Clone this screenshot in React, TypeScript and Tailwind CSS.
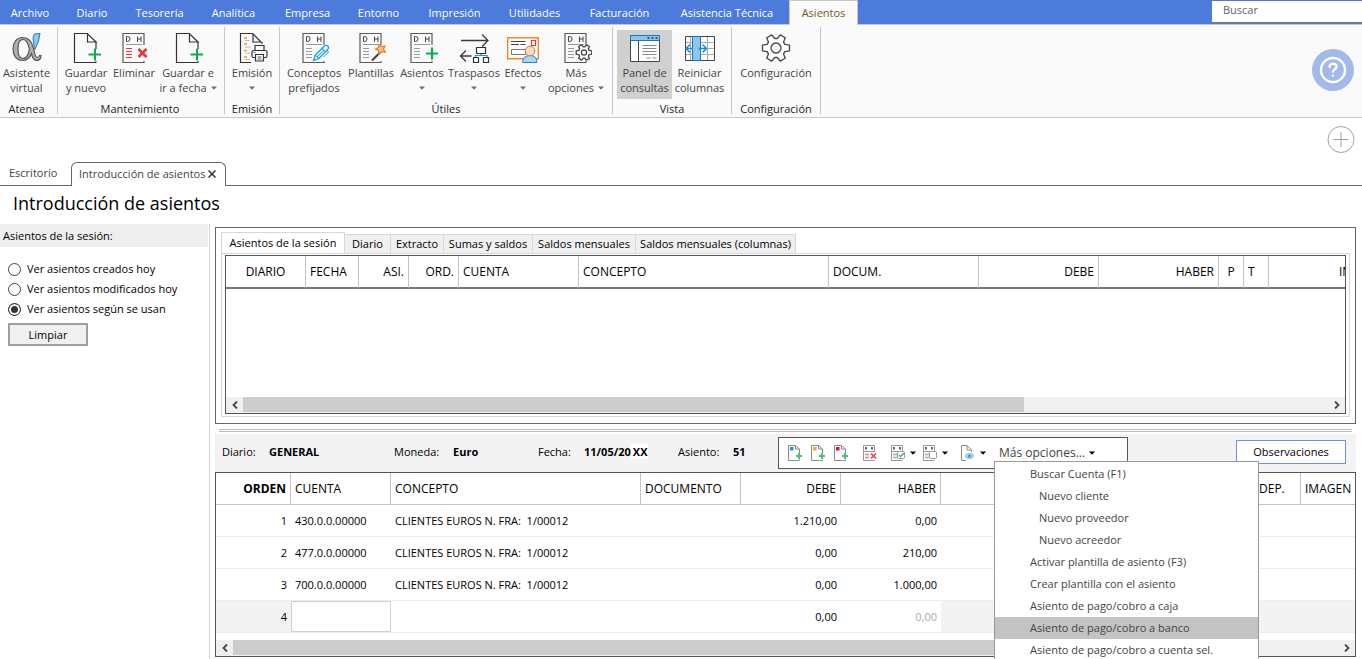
import React from "react";

type Children = { children?: React.ReactNode };

const gearPath = (cx: number, cy: number, outer: number, inner: number) => {
  const pts: string[] = [];
  for (let k = 0; k < 6; k++) {
    const steps: [number, number][] = [
      [-22, inner],
      [-12, outer],
      [12, outer],
      [22, inner],
    ];
    for (const [deg, r] of steps) {
      const a = ((k * 60 + deg) * Math.PI) / 180;
      pts.push(`${(cx + r * Math.cos(a)).toFixed(2)} ${(cy + r * Math.sin(a)).toFixed(2)}`);
    }
  }
  return `M${pts.join("L")}Z`;
};

const Icon = ({ children }: Children) => (
  <svg width="32" height="32" viewBox="0 0 32 32" fill="none" className="mx-auto block shrink-0" aria-hidden="true">
    {children}
  </svg>
);

const Caret = ({ dark = false }: { dark?: boolean }) => (
  <svg width="6" height="4" viewBox="0 0 6 4" className="inline-block shrink-0" aria-hidden="true">
    <path d="M0 0.5h6L3 3.8z" fill={dark ? "#000" : "#6e6e6e"} />
  </svg>
);

const Page = () => (
  <>
    <path d="M18 .5H4.500v29h21.500M26 9v7M26 28v1.500" stroke="#333" strokeWidth="1.200" />
    <path d="M17.500 .8v8.200h8.500z" stroke="#333" strokeWidth="1.200" fill="#fff" />
  </>
);

const Plus = () => <path d="M18.500 21.500h12.500M25 15.500v12" stroke="#12a84c" strokeWidth="2" />;

const Ledger = ({ lines = "#9a9a9a" }: { lines?: string }) => (
  <>
    <path d="M26 12V.5H5v29h21v-1.500" stroke="#5c5c5c" strokeWidth="1.200" />
    <path d="M8.500 3.500h1.200q2.300 0 2.300 2.500t-2.300 2.500h-1.200zM19.500 3.500v5.500M23 3.500v5.500M19.500 6h3.500" stroke="#444" />
    <path d="M8 11.500h16" stroke="#999" />
    <path d="M8 15.500h6M8 18.500h6M8 21.500h6M8 24.500h6" stroke={lines} />
  </>
);

const icons = {
  alpha: (
    <Icon>
      <path
        d="M11.500 4.500C5.500 4.500 2 9.500 2 16s3.500 11.500 9.500 11.500c4.500 0 7.500-3 9-7 1 4.500 2.500 7 5 7 2.800 0 4.500-2 4.500-5h-1.500c-.3 1.500-1 2-2 2-2 0-3-4-4-9-1.500-7-5-11-11-11zM12 6.500c3.800 0 5.500 5 6.500 10-1.200 5.500-3 9-6.500 9-4 0-5-4.500-5-9.500s1-9.500 5-9.500z"
        fill="#b0b0b0"
        stroke="#555"
        strokeWidth="1.200"
        fillRule="evenodd"
      />
      <path d="M22 4.500l1.500-3.500 5.500-.5q-.5 8-5.500 16.500z" fill="#8fc8f0" stroke="#2b78b4" />
    </Icon>
  ),
  pagePlus: (
    <Icon>
      <Page />
      <Plus />
    </Icon>
  ),
  remove: (
    <Icon>
      <Ledger lines="#e33" />
      <path d="M20.500 16l8 8M28.500 16l-8 8" stroke="#ee3338" strokeWidth="2.600" />
    </Icon>
  ),
  print: (
    <Icon>
      <path d="M17 .5H4.500v29H15M26 9v2" stroke="#333" strokeWidth="1.200" />
      <path d="M17 .8v8.200h8z" stroke="#333" strokeWidth="1.200" />
      <path d="M8 5h3M8 11h3M8 17.500h3M8 24h3" stroke="#f0a020" strokeWidth="1.300" />
      <path d="M9 7.500h5M9 14h6M9 20h5M9 26.500h5" stroke="#bbb" />
      <path d="M19 17.500v-5h9v5" fill="#fff" stroke="#333" strokeWidth="1.200" />
      <rect x="16" y="17.500" width="15" height="7" rx="1.500" fill="#fff" stroke="#333" strokeWidth="1.200" />
      <path d="M19.500 21.500h8v6.500h-8z" fill="#fff" stroke="#333" strokeWidth="1.200" />
      <path d="M21.500 24h4M21.500 26h4" stroke="#555" />
      <path d="M17.500 19.500h2" stroke="#1688d0" />
    </Icon>
  ),
  pencil: (
    <Icon>
      <Ledger />
      <path d="M15.500 27.500l1.800-5.500 9-9q2-1.500 3.500 0t0 3.500l-9 9z" fill="#d9f1fd" stroke="#159ddd" strokeWidth="1.200" />
      <path d="M17.300 22l3.500 3.500M24 15.500l3.500 3.200M19 24l7-7M29 17.500l1.500 1.500-5 5" stroke="#159ddd" />
    </Icon>
  ),
  wand: (
    <Icon>
      <Ledger />
      <path d="M17 27.500l8.500-8.500" stroke="#444" strokeWidth="2.200" />
      <path d="M24 11.500l2.500 2 3.500-.5-1.500 3 1.700 3.200-3.600-.5-2.600 2.300-.5-3.500-3-1.500 3-1.500z" fill="#fbc27a" stroke="#ee7a28" strokeWidth="1.200" />
    </Icon>
  ),
  ledgerPlus: (
    <Icon>
      <Ledger />
      <path d="M20 20.500h12M26 14.500v12" stroke="#12a84c" strokeWidth="2.200" />
    </Icon>
  ),
  transfer: (
    <Icon>
      <path d="M3 7.500h26.500M24 1.500l6 6-6 6M2.500 23h11M8 17.500l-5.500 5.500 5.500 5.500" stroke="#3c3c3c" strokeWidth="1.300" />
      <path d="M23 20.500v2M17.500 25v-2.500h11.500v2.500" stroke="#2490d8" strokeWidth="1.200" />
      <path d="M18.500 14.500h9v6h-9zM15.500 24.500h5v5h-5zM25.500 24.500h5v5h-5z" fill="#fff" stroke="#333" strokeWidth="1.200" />
    </Icon>
  ),
  effects: (
    <Icon>
      <path d="M.7 4.700h30.600v21H.7z" fill="#fff" stroke="#ee8a2c" strokeWidth="1.400" />
      <path d="M4 8.500h14.500M4 11.500h8M13.500 11.500h5" stroke="#444" strokeWidth="1.200" />
      <path d="M4.500 16.500h14v5h-14z" stroke="#777" />
      <path d="M24.500 7.500h4v5h-4z" stroke="#e33" strokeWidth="1.200" />
      <path d="M15.500 29.500q.5-7 7.500-7t7 7z" fill="#a9d6f5" stroke="#2c83c4" />
      <circle cx="23" cy="18" r="4.800" fill="#fbdcb8" stroke="#c98048" />
    </Icon>
  ),
  ledgerGear: (
    <Icon>
      <Ledger />
      <path d={gearPath(24, 19.500, 8, 5.600)} fill="#fff" stroke="#444" strokeWidth="1.300" strokeLinejoin="round" />
      <circle cx="24" cy="19.500" r="2.600" stroke="#444" strokeWidth="1.200" />
    </Icon>
  ),
  panel: (
    <Icon>
      <path d="M1.500 2.500h29v26h-29z" fill="#fff" stroke="#444" />
      <path d="M1.500 2.500h29v5h-29z" fill="#8cc6ef" stroke="#1c78bd" />
      <path d="M18.500 5h2M22.500 5h2M26.500 5h2" stroke="#333" strokeWidth="1.600" />
      <path d="M9.500 8v20" stroke="#444" />
      <path d="M13.500 12.500h14M13.500 15.500h14M13.500 18.500h14M13.500 21.500h14M17.500 25h4M23.500 25h4" stroke="#888" />
    </Icon>
  ),
  columns: (
    <Icon>
      <path d="M1.500 3.500h29v24h-29z" fill="#fff" stroke="#444" />
      <path d="M2 9.500h28M2 15.500h28M2 21.500h28M23.500 4v23M6.500 4v23" stroke="#aaa" />
      <path d="M8.500 3.500h8v24h-8z" fill="#8cc6ef" stroke="#1c78bd" />
      <path d="M9 15.500H2.500M6 11.500l-4 4 4 4M14.500 15.500h7.500M18.500 11.500l4 4-4 4" stroke="#1e8ad2" strokeWidth="1.500" />
    </Icon>
  ),
  gear: (
    <Icon>
      <path d={gearPath(16, 15, 13.800, 9.600)} fill="#fff" stroke="#444" strokeWidth="1.300" strokeLinejoin="round" />
      <circle cx="16" cy="15" r="5" stroke="#444" strokeWidth="1.300" />
    </Icon>
  ),
};

type Action = {
  icon: keyof typeof icons;
  top: string;
  bottom?: string;
  caret?: boolean;
  active?: boolean;
  width: string;
};

const groups: { title: string; pad: string; actions: Action[] }[] = [
  { title: "Atenea", pad: "pl-0 pr-1", actions: [{ icon: "alpha", top: "Asistente", bottom: "virtual", width: "w-[53px]" }] },
  {
    title: "Mantenimiento",
    pad: "pl-1 pr-1.5",
    actions: [
      { icon: "pagePlus", top: "Guardar", bottom: "y nuevo", width: "w-12" },
      { icon: "remove", top: "Eliminar", width: "w-12" },
      { icon: "pagePlus", top: "Guardar e", bottom: "ir a fecha", caret: true, width: "w-15" },
    ],
  },
  { title: "Emisión", pad: "px-0", actions: [{ icon: "print", top: "Emisión", caret: true, width: "w-[54px]" }] },
  {
    title: "Útiles",
    pad: "px-1",
    actions: [
      { icon: "pencil", top: "Conceptos", bottom: "prefijados", width: "w-15" },
      { icon: "wand", top: "Plantillas", width: "w-[54px]" },
      { icon: "ledgerPlus", top: "Asientos", caret: true, width: "w-12" },
      { icon: "transfer", top: "Traspasos", caret: true, width: "w-14" },
      { icon: "effects", top: "Efectos", caret: true, width: "w-[42px]" },
      { icon: "ledgerGear", top: "Más", bottom: "opciones", caret: true, width: "w-16" },
    ],
  },
  {
    title: "Vista",
    pad: "px-1",
    actions: [
      { icon: "panel", top: "Panel de", bottom: "consultas", active: true, width: "w-[55px]" },
      { icon: "columns", top: "Reiniciar", bottom: "columnas", width: "w-[55px]" },
    ],
  },
  { title: "Configuración", pad: "px-0", actions: [{ icon: "gear", top: "Configuración", width: "w-[88px]" }] },
];

const menus: [string, string][] = [
  ["Archivo", "w-[60px]"],
  ["Diario", "w-[64px]"],
  ["Tesorería", "w-[71px]"],
  ["Analítica", "w-[77px]"],
  ["Empresa", "w-[71px]"],
  ["Entorno", "w-[71px]"],
  ["Impresión", "w-[81px]"],
  ["Utilidades", "w-[79px]"],
  ["Facturación", "w-[91px]"],
  ["Asistencia Técnica", "w-[124px]"],
];

const MenuBar = () => (
  <header className="flex h-[25px] shrink-0 items-start border-b border-[#c8c8c8] bg-[#4c7bdc]">
    <nav className="flex h-[25px]">
      {menus.map(([m, w]) => (
        <button key={m} className={`${w} whitespace-nowrap text-center text-white`}>
          {m}
        </button>
      ))}
      <button className="h-[25px] w-[69px] border-x border-t border-[#c8c8c8] bg-[#fafafa] text-[#7a5b10]">Asientos</button>
    </nav>
    <input
      aria-label="Buscar"
      placeholder="Buscar"
      className="mt-px ml-auto h-[22px] w-[150px] border-b border-[#777] bg-white px-[11px] pb-1 outline-none placeholder:text-[#666]"
    />
  </header>
);

const Ribbon = () => (
  <section className="flex h-[93px] shrink-0 items-start border-b border-[#c8c8c8] bg-[#fafafa]">
    {groups.map((g) => (
      <div key={g.title} className={`${g.pad} mt-0.5 h-[87px] border-r border-[#c8c8c8] pt-[3px]`}>
        <div className="flex">
          {g.actions.map((a, i) => (
            <button
              key={i}
              className={`${a.width} flex h-[69px] flex-col items-center pt-[3px] whitespace-nowrap text-[#444] ${a.active ? "bg-[#d0d0d0]" : ""}`}
            >
              {icons[a.icon]}
              <span className="leading-[15px]">{a.top}</span>
              <span className="flex h-[15px] items-center gap-1 leading-[15px]">
                {a.bottom}
                {a.caret && <Caret />}
              </span>
            </button>
          ))}
        </div>
        <h2 className="mt-[3px] text-center leading-[14px] text-[#222]">{g.title}</h2>
      </div>
    ))}
    <button aria-label="Ayuda" className="mt-6 mr-2 ml-auto flex size-[42px] items-center justify-center rounded-full bg-[#a3b9ea]">
      <svg width="28" height="28" viewBox="0 0 28 28" fill="none" stroke="#fff" strokeLinecap="round">
        <circle cx="14" cy="14" r="12" strokeWidth="2.400" />
        <path d="M10.500 11q.3-3.300 3.600-3.300 3.500.2 3.500 3.200c0 2.200-3.400 2.300-3.600 4.800" strokeWidth="2.300" />
        <circle cx="14" cy="19.600" r=".4" strokeWidth="1.800" />
      </svg>
    </button>
  </section>
);

const DocumentTabs = () => (
  <section className="flex h-[68px] shrink-0 flex-col justify-between">
    <button aria-label="Añadir" className="mt-2 mr-[7px] size-7 self-end">
      <svg width="28" height="28" viewBox="0 0 28 28" fill="none" stroke="#a2a2a2">
        <circle cx="14" cy="13.500" r="13" />
        <path d="M6.500 13.500h15M14 6v15" />
      </svg>
    </button>
    <div className="flex h-6 items-end text-[#444]">
      <button className="h-6 w-[71px] border-b border-[#666] pb-px pl-[9px] text-left">Escritorio</button>
      <button className="flex h-6 w-[155px] items-center gap-[3px] rounded-t-md border-x border-t border-[#666] pb-0.5 pl-[7px] whitespace-nowrap">
        Introducción de asientos
        <svg width="8" height="8" viewBox="0 0 8 8" stroke="#333" strokeWidth="1.500" className="shrink-0">
          <path d="M.5 .5l7 7M7.500 .5l-7 7" />
        </svg>
      </button>
      <div className="h-6 flex-1 border-b border-[#666]" />
    </div>
  </section>
);

const Sidebar = () => (
  <aside className="w-[210px] shrink-0 border-r border-[#d4d4d4]">
    <h2 className="mr-px h-[23px] bg-[#eee] pl-[3px] leading-[23px]">Asientos de la sesión:</h2>
    <div className="mt-3 px-2">
      {["Ver asientos creados hoy", "Ver asientos modificados hoy", "Ver asientos según se usan"].map((t, i) => (
        <label key={t} className="flex h-5 items-center gap-1.5">
          <input
            type="radio"
            name="vista"
            defaultChecked={i === 2}
            className="size-[13px] appearance-none rounded-full border border-[#444] bg-white checked:border-[#333] checked:bg-[#333] checked:shadow-[inset_0_0_0_2px_#fff]"
          />
          {t}
        </label>
      ))}
      <button className="mt-1 h-[23px] w-20 border-2 border-[#a0a0a0] bg-[#f0f0f0]">Limpiar</button>
    </div>
  </aside>
);

const Chevron = ({ right = false }: { right?: boolean }) => (
  <button aria-label={right ? "Desplazar a la derecha" : "Desplazar a la izquierda"} className="flex h-full w-[17px] shrink-0 items-center justify-center">
    <svg width="6" height="8" viewBox="0 0 6 8" fill="none" stroke="#444" strokeWidth="1.800">
      <path d={right ? "M1 .5L4.500 4 1 7.500" : "M5 .5L1.500 4 5 7.500"} />
    </svg>
  </button>
);

const ScrollBar = ({ thumb }: { thumb: string }) => (
  <div className="flex h-4 shrink-0 bg-[#f0f0f0]">
    <Chevron />
    <div className="flex-1 pb-px">
      <div className={`${thumb} h-full bg-[#cdcdcd]`} />
    </div>
    <Chevron right />
  </div>
);

const queryTabs: [string, string][] = [
  ["Diario", "w-[46px]"],
  ["Extracto", "w-[53px]"],
  ["Sumas y saldos", "w-[89px]"],
  ["Saldos mensuales", "w-[103px]"],
  ["Saldos mensuales (columnas)", "w-[160px]"],
];

const queryColumns: [string, string][] = [
  ["DIARIO", "w-20 text-center"],
  ["FECHA", "w-[53px] text-left"],
  ["ASI.", "w-[50px] text-right"],
  ["ORD.", "w-[50px] text-right"],
  ["CUENTA", "w-[120px] text-left"],
  ["CONCEPTO", "w-[250px] text-left"],
  ["DOCUM.", "w-[150px] text-left"],
  ["DEBE", "w-[120px] text-right"],
  ["HABER", "w-[120px] text-right"],
  ["P", "w-[25px] text-center"],
  ["T", "w-[25px] text-left"],
];

const QueryPanel = () => (
  <section className="flex h-[197px] shrink-0 flex-col border border-[#666] px-[5px] pt-[5px] pb-1.5">
    <div className="flex h-5 items-end">
      <button className="h-[21px] w-[124px] shrink-0 border-x border-t border-[#d8d8d8] bg-white text-center whitespace-nowrap">Asientos de la sesión</button>
      {queryTabs.map(([t, w]) => (
        <button key={t} className={`${w} h-[19px] shrink-0 border-t border-r border-[#d8d8d8] bg-[#f0f0f0] text-center whitespace-nowrap`}>
          {t}
        </button>
      ))}
    </div>
    <div className="flex flex-1 flex-col border border-[#d8d8d8] pt-px pr-[3px] pb-0.5 pl-[3px]">
      <div className="flex flex-1 flex-col border border-[#555]">
        <div className="flex-1 overflow-hidden">
          <table className="w-full table-fixed border-separate border-spacing-0 text-xs">
            <thead>
              <tr>
                {queryColumns.map(([t, c]) => (
                  <th key={t} className={`${c} h-[33px] border-r border-b-2 border-r-[#c4c4c4] border-b-[#777] px-1 font-normal`}>
                    {t}
                  </th>
                ))}
                <th className="overflow-hidden border-b-2 border-[#777] pl-[70px] text-left font-normal whitespace-nowrap">IMPORTE</th>
              </tr>
            </thead>
          </table>
        </div>
        <ScrollBar thumb="w-[72%]" />
      </div>
    </div>
  </section>
);

const ToolIcon = ({ children }: Children) => (
  <svg width="16" height="18" viewBox="0 0 16 18" fill="none" className="shrink-0" aria-hidden="true">
    {children}
  </svg>
);

const SmallPage = ({ color }: { color: string }) => (
  <ToolIcon>
    <path d="M8 1.500H1.500v15H9M12.500 5v4M12.500 15.500v1h-3M8.500 1.500v3.500h4z" stroke="#8a8a8a" />
    <path d="M3 3h3.500v3.500H3z" fill={color} />
    <path d="M9 12h6M12 9v6" stroke="#52c07a" strokeWidth="2" />
  </ToolIcon>
);

const SmallLedger = ({ lines = "#aaa", children }: { lines?: string; children?: React.ReactNode }) => (
  <ToolIcon>
    <path d="M12.500 8V1.500h-11v15h11M2 7.500h10" stroke="#999" />
    <path d="M4 3v2.500M10 3v2.500" stroke="#666" strokeWidth="2" />
    <path d="M3 10.500h4M3 13.500h4" stroke={lines} strokeWidth="1.500" />
    {children}
  </ToolIcon>
);

const moreOptions: [string, boolean][] = [
  ["Buscar Cuenta (F1)", false],
  ["Nuevo cliente", true],
  ["Nuevo proveedor", true],
  ["Nuevo acreedor", true],
  ["Activar plantilla de asiento (F3)", false],
  ["Crear plantilla con el asiento", false],
  ["Asiento de pago/cobro a caja", false],
  ["Asiento de pago/cobro a banco", false],
  ["Asiento de pago/cobro a cuenta sel.", false],
];

const MoreOptions = () => (
  <div className="relative ml-2 h-full text-[#444]">
    <button className="flex h-[30px] items-center gap-1 px-[5px] text-xs whitespace-nowrap">
      Más opciones...
      <Caret dark />
    </button>
    <ul role="menu" className="absolute top-[23px] left-0 z-10 w-[265px] border border-[#999] bg-white pt-px pb-2">
      {moreOptions.map(([t, sub]) => (
        <li key={t} role="none">
          <button
            role="menuitem"
            className={`h-[22px] w-full text-left ${sub ? "pl-11" : "pl-[35px]"} ${t.endsWith("banco") ? "bg-[#c3c3c3]" : ""}`}
          >
            {t}
          </button>
        </li>
      ))}
    </ul>
  </div>
);

const EntryBar = () => (
  <div className="flex h-[38px] shrink-0 items-center bg-[#f3f3f3] pr-[10px] pl-[7px]">
    <dl className="grid shrink-0 grid-cols-[47px_125px_59px_85px_46px_94px_55px_45px] pb-0.5 whitespace-nowrap">
      <dt>Diario:</dt>
      <dd className="font-bold">GENERAL</dd>
      <dt>Moneda:</dt>
      <dd className="font-bold">Euro</dd>
      <dt>Fecha:</dt>
      <dd className="font-bold">
        11/05/20<span className="bg-white pl-0.5">XX</span>
      </dd>
      <dt>Asiento:</dt>
      <dd className="font-bold">51</dd>
    </dl>
    <div className="flex h-8 w-[350px] shrink-0 items-center border border-[#555] bg-white pl-2">
      <div className="flex gap-[7px]">
        <button aria-label="Nuevo apunte"><SmallPage color="#1a9ad8" /></button>
        <button aria-label="Nuevo apunte medio"><SmallPage color="#f2a52c" /></button>
        <button aria-label="Nuevo apunte final"><SmallPage color="#d9132c" /></button>
      </div>
      <button aria-label="Eliminar apunte" className="ml-[13px]">
        <SmallLedger lines="#f08080">
          <path d="M9 9.500l5 5M14 9.500l-5 5" stroke="#e8484c" strokeWidth="1.700" />
        </SmallLedger>
      </button>
      <button aria-label="Validar" className="ml-3 flex items-center gap-1">
        <SmallLedger>
          <rect x="7.500" y="7.500" width="7" height="7" rx="1" fill="#fff" stroke="#999" />
          <path d="M9 11l1.500 1.500L14 9" stroke="#3bb36a" strokeWidth="1.300" />
        </SmallLedger>
        <Caret dark />
      </button>
      <button aria-label="Marcar" className="ml-1.5 flex items-center gap-1">
        <SmallLedger>
          <rect x="7.500" y="7.500" width="7" height="7" rx="1" fill="#fff" stroke="#999" />
        </SmallLedger>
        <Caret dark />
      </button>
      <button aria-label="Ver documento" className="ml-3 flex items-center gap-1">
        <ToolIcon>
          <path d="M7 1.500H1.500v15H6M11.500 6v2M7 1.500v4.500h4.500z" stroke="#8a8a8a" />
          <ellipse cx="9.500" cy="12" rx="4" ry="2.500" fill="#b9daf0" stroke="#8bb9d8" />
          <circle cx="9.500" cy="12" r="1.600" fill="#4a90c4" />
        </ToolIcon>
        <Caret dark />
      </button>
      <MoreOptions />
    </div>
    <button className="mb-[3px] ml-auto h-6 w-[110px] border border-[#6c92e4] bg-white">Observaciones</button>
  </div>
);

const entryColumns: [string, string][] = [
  ["ORDEN", "w-[75px] text-right font-bold"],
  ["CUENTA", "w-[100px] text-left font-normal"],
  ["CONCEPTO", "w-[250px] text-left font-normal"],
  ["DOCUMENTO", "w-[100px] text-left font-normal"],
  ["DEBE", "w-[100px] text-right font-normal"],
  ["HABER", "w-[100px] text-right font-normal"],
  ["", "font-normal"],
  ["DEP.", "w-[46px] text-left font-normal"],
  ["IMAGEN", "w-[54px] text-left font-normal"],
];

const entries = [
  ["1", "430.0.0.00000", "1.210,00", "0,00"],
  ["2", "477.0.0.00000", "0,00", "210,00"],
  ["3", "700.0.0.00000", "0,00", "1.000,00"],
];

const EntryTable = () => (
  <section className="flex h-[185px] shrink-0 flex-col border border-[#555]">
    <div className="flex-1 overflow-hidden">
      <table className="w-full table-fixed border-separate border-spacing-0">
        <thead>
          <tr>
            {entryColumns.map(([t, c], i) => (
              <th key={i} className={`${c} h-8 border-r border-b border-[#c4c4c4] px-1 text-xs last:border-r-0`}>
                {t}
              </th>
            ))}
          </tr>
        </thead>
        <tbody>
          {entries.map(([n, account, debit, credit]) => (
            <tr key={n} className="[&>td]:h-8 [&>td]:border-b [&>td]:border-[#eee] [&>td]:px-1">
              <td className="text-right">{n}</td>
              <td>{account}</td>
              <td className="whitespace-pre">{"CLIENTES EUROS N. FRA:  1/00012"}</td>
              <td />
              <td className="text-right">{debit}</td>
              <td className="text-right">{credit}</td>
              <td />
              <td />
              <td />
            </tr>
          ))}
          <tr className="[&>td]:h-8 [&>td]:border-b [&>td]:border-[#eee]">
            <td className="bg-[#f3f3f3] px-1 text-right">4</td>
            <td>
              <input aria-label="Cuenta" className="block h-[31px] w-full border border-[#d0d0d0] bg-white px-1" />
            </td>
            <td />
            <td />
            <td className="px-1 text-right">0,00</td>
            <td className="px-1 text-right text-[#aaa]">0,00</td>
            <td className="bg-[#f3f3f3]" />
            <td className="bg-[#f3f3f3]" />
            <td className="bg-[#f3f3f3]" />
          </tr>
        </tbody>
      </table>
    </div>
    <ScrollBar thumb="w-[92%]" />
  </section>
);

export default function App() {
  return (
    <div className="flex h-screen flex-col overflow-hidden bg-white font-['Open_Sans','Noto_Sans',sans-serif] text-[11px] leading-4 text-black">
      <MenuBar />
      <Ribbon />
      <DocumentTabs />
      <h1 className="h-[38px] shrink-0 pl-[13px] text-lg leading-[34px]">Introducción de asientos</h1>
      <div className="flex flex-1">
        <Sidebar />
        <main className="flex min-w-0 flex-1 flex-col pt-[3px] pr-1.5 pl-[5px]">
          <QueryPanel />
          <div className="mx-1 mt-[5px] mb-0.5 h-[3px] shrink-0 border-y border-[#bbb]" />
          <EntryBar />
          <EntryTable />
        </main>
      </div>
    </div>
  );
}
